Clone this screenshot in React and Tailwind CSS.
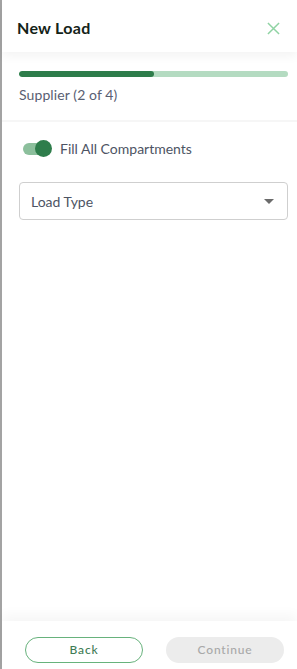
export default function App() {
  return (
    <div
      className="flex h-[669px] w-[297px] flex-col border-l-2 border-[#a3a3a3] bg-white text-[#505766]"
      style={{ fontFamily: "Lato, 'Open Sans', sans-serif" }}
    >
      {/* Header */}
      <div className="flex h-[52px] items-center justify-between pl-[15px] pr-[12px] pt-[4px] shadow-[0_4px_10px_rgba(0,0,0,0.05)]">
        <h1 className="text-[16px] font-bold tracking-[0.3px] text-[#142318]">New Load</h1>
        <button className="flex h-6 w-6 items-center justify-center text-[#8fd3a3]">
          <svg width="13" height="13" viewBox="0 0 14 14" fill="none" stroke="currentColor" strokeWidth="1.6">
            <path d="M1 1l12 12M13 1L1 13" />
          </svg>
        </button>
      </div>

      {/* Progress */}
      <div className="pl-[17px] pr-[9px] pt-[19px] pb-[15px]">
        <div className="flex h-[6px] w-full overflow-hidden rounded-full bg-[#b4dbc1]">
          <div className="h-full w-1/2 rounded-full bg-[#2e7d4b]" />
        </div>
        <p className="mt-[7px] text-[14px] tracking-[0.1px] text-[#596072]">Supplier (2 of 4)</p>
      </div>

      <div className="h-[2px] bg-[#f6f6f6]" />

      {/* Form */}
      <div className="flex-1 pl-[17px] pr-[9px] pt-[16px]">
        <label className="flex items-center gap-[9px] pl-[4px]">
          <span className="relative flex h-[12px] w-[28px] items-center rounded-full bg-[#8cbf9c]">
            <span className="absolute right-[-1px] h-[17px] w-[17px] rounded-full bg-[#2e7d4b]" />
          </span>
          <span className="text-[14px] text-[#4d5464]">Fill All Compartments</span>
        </label>

        <div className="mt-[23px] flex h-[38px] items-center justify-between rounded-[4px] border border-[#cfcfcf] pl-[11px] pr-[13px]">
          <span className="text-[14px] text-[#4d5464]">Load Type</span>
          <svg width="10" height="5" viewBox="0 0 10 5">
            <path d="M0 0h10L5 5z" fill="#6b6b6b" />
          </svg>
        </div>
      </div>

      {/* Footer */}
      <div className="flex h-[48px] items-start justify-between pl-[23px] pr-[13px] pt-[16px] shadow-[0_-6px_12px_rgba(0,0,0,0.04)]">
        <button className="h-[26px] w-[118px] rounded-full border border-[#67b27c] text-[12px] font-medium tracking-[0.8px] text-[#3f7c55]">
          Back
        </button>
        <button className="h-[26px] w-[118px] rounded-full bg-[#ececec] text-[12px] font-medium tracking-[0.8px] text-[#a8a8a8]">
          Continue
        </button>
      </div>
    </div>
  );
}
